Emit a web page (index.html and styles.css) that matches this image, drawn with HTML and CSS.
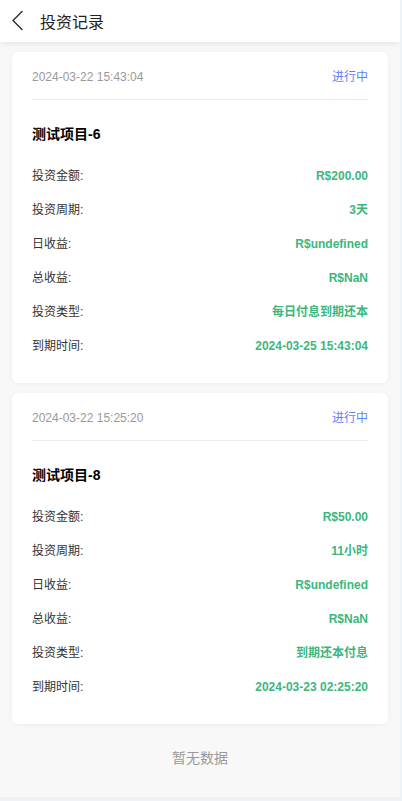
FILE: index.html
```html
<!DOCTYPE html>
<html lang="zh">
<head>
<meta charset="utf-8">
<title>投资记录</title>
<link rel="stylesheet" href="styles.css">
</head>
<body>
<div class="app">
  <header class="nav">
    <span class="back">
      <svg width="14" height="22" viewBox="0 0 14 22"><path d="M11 1.5 L2 10.5 L11 19.5" fill="none" stroke="#333" stroke-width="1.5" stroke-linecap="round" stroke-linejoin="round"/></svg>
    </span>
    <span class="nav-title">投资记录</span>
  </header>
  <main class="list">
    <section class="card">
      <div class="card-head"><span class="date">2024-03-22 15:43:04</span><span class="status">进行中</span></div>
      <div class="card-title">测试项目-6</div>
      <div class="rows">
        <div class="row"><span class="label">投资金额:</span><span class="val">R$200.00</span></div>
        <div class="row"><span class="label">投资周期:</span><span class="val">3天</span></div>
        <div class="row"><span class="label">日收益:</span><span class="val">R$undefined</span></div>
        <div class="row"><span class="label">总收益:</span><span class="val">R$NaN</span></div>
        <div class="row"><span class="label">投资类型:</span><span class="val">每日付息到期还本</span></div>
        <div class="row"><span class="label">到期时间:</span><span class="val">2024-03-25 15:43:04</span></div>
      </div>
    </section>
    <section class="card">
      <div class="card-head"><span class="date">2024-03-22 15:25:20</span><span class="status">进行中</span></div>
      <div class="card-title">测试项目-8</div>
      <div class="rows">
        <div class="row"><span class="label">投资金额:</span><span class="val">R$50.00</span></div>
        <div class="row"><span class="label">投资周期:</span><span class="val">11小时</span></div>
        <div class="row"><span class="label">日收益:</span><span class="val">R$undefined</span></div>
        <div class="row"><span class="label">总收益:</span><span class="val">R$NaN</span></div>
        <div class="row"><span class="label">投资类型:</span><span class="val">到期还本付息</span></div>
        <div class="row"><span class="label">到期时间:</span><span class="val">2024-03-23 02:25:20</span></div>
      </div>
    </section>
    <div class="empty">暂无数据</div>
  </main>
</div>
</body>
</html>
```
FILE: styles.css
```css
html, body {
  margin: 0;
  padding: 0;
  background: #eef3f8;
  font-family: "Liberation Sans", Arial, "Noto Sans CJK SC", sans-serif;
}
.app {
  width: 400px;
  height: 797px;
  background: #f8f8f8;
  overflow: hidden;
}
.nav {
  height: 42px;
  background: #fff;
  display: flex;
  align-items: center;
  box-shadow: 0 2px 6px rgba(0, 0, 0, 0.08);
  position: relative;
  z-index: 1;
}
.back {
  width: 14px;
  height: 22px;
  margin-left: 11px;
  display: flex;
}
.nav-title {
  margin-left: 15px;
  font-size: 16px;
  color: #222;
}
.list {
  padding: 10px 12px 0;
  display: flex;
  flex-direction: column;
  gap: 10px;
}
.card {
  background: #fff;
  border-radius: 6px;
  padding: 15px 20px 20px;
  box-shadow: 0 1px 6px rgba(0, 0, 0, 0.04);
}
.card-head {
  display: flex;
  justify-content: space-between;
  line-height: 20px;
  font-size: 12px;
  padding-bottom: 12px;
  border-bottom: 1px solid #ececec;
}
.date { color: #999; }
.status { color: #5a83fb; }
.card-title {
  margin-top: 24px;
  line-height: 20px;
  font-size: 14px;
  font-weight: bold;
  color: #000;
}
.rows { margin-top: 15px; }
.row {
  display: flex;
  justify-content: space-between;
  height: 34px;
  line-height: 34px;
  font-size: 12px;
}
.label { color: #333; }
.val { color: #3bb77e; font-weight: bold; }
.empty {
  padding: 14px 0 25px;
  line-height: 20px;
  text-align: center;
  font-size: 14px;
  color: #999;
}
```
